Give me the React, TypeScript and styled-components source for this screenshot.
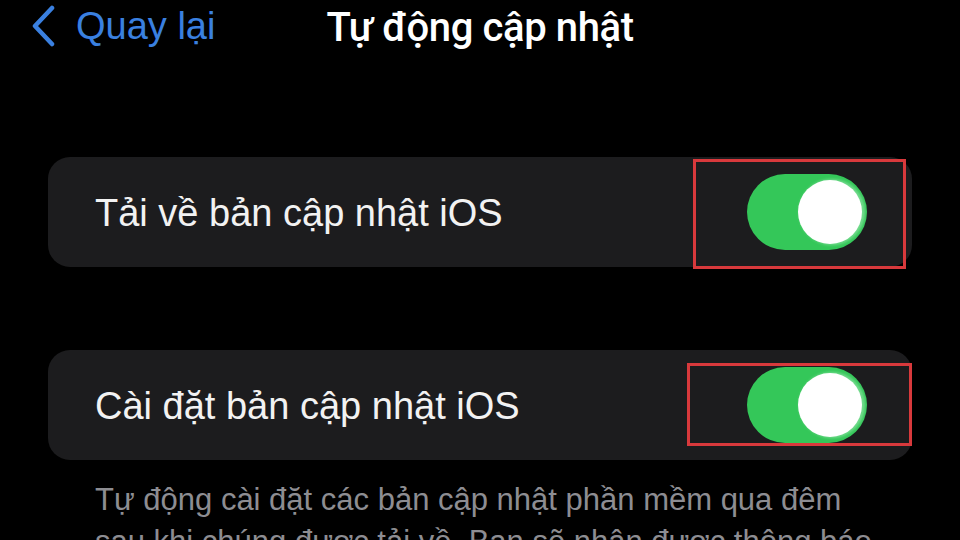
import styled, { createGlobalStyle } from 'styled-components';

const GlobalStyle = createGlobalStyle`
  html, body {
    margin: 0;
    padding: 0;
    background: #000;
  }
  body {
    width: 960px;
    height: 540px;
    overflow: hidden;
    font-family: 'Liberation Sans', 'Noto Sans', sans-serif;
  }
`;

type Box = { top: number; right: number; bottom: number; left: number };

const rows: { label: string; box: Box }[] = [
  { label: 'Tải về bản cập nhật iOS', box: { top: -15, right: -39, bottom: -19, left: -54 } },
  { label: 'Cài đặt bản cập nhật iOS', box: { top: -4, right: -45, bottom: -3, left: -60 } },
];

const ChevronLeft = () => (
  <svg width='28' height='42' viewBox='0 0 28 42' fill='none'>
    <polyline
      points='22,3 5,21 22,39'
      stroke='#3a80e0'
      strokeWidth='4.5'
      strokeLinecap='round'
      strokeLinejoin='round'
    />
  </svg>
);

const App = () => {
  return (
    <Screen>
      <GlobalStyle />
      <NavBar>
        <BackButton>
          <ChevronLeft />
          <span>Quay lại</span>
        </BackButton>
        <Title>Tự động cập nhật</Title>
        <div />
      </NavBar>

      <Content>
        {rows.map((row) => (
          <Card key={row.label}>
            <Label>{row.label}</Label>
            <ToggleWrap>
              <Toggle>
                <Knob />
              </Toggle>
              <Highlight {...row.box} />
            </ToggleWrap>
          </Card>
        ))}
        <Footer>
          Tự động cài đặt các bản cập nhật phần mềm qua đêm sau khi chúng được
          tải về. Bạn sẽ nhận được thông báo trước khi cập nhật được cài đặt.
        </Footer>
      </Content>
    </Screen>
  );
};

export default App;

const Screen = styled.div`
  width: 960px;
  height: 540px;
  overflow: hidden;
  background: #000;
  color: #fff;
`;

const NavBar = styled.div`
  display: grid;
  grid-template-columns: 1fr auto 1fr;
  align-items: center;
  height: 54px;
  padding: 0 30px;
`;

const BackButton = styled.div`
  display: flex;
  align-items: center;
  gap: 18px;
  color: #3a80e0;
  font-size: 38px;
  margin-top: -2px;

  svg {
    flex-shrink: 0;
  }
`;

const Title = styled.h1`
  margin: 0;
  font-family: Roboto, 'Liberation Sans', sans-serif;
  font-size: 40px;
  font-weight: 500;
  color: #fff;
  letter-spacing: -0.4px;
`;

const Content = styled.div`
  display: flex;
  flex-direction: column;
  gap: 83px;
  padding: 103px 48px 0 48px;
`;

const Card = styled.div`
  display: flex;
  align-items: center;
  justify-content: space-between;
  height: 110px;
  padding: 0 45px 0 47px;
  background: #1c1c1e;
  border-radius: 22px;
`;

const Label = styled.span`
  font-size: 38px;
  color: #f2f2f2;
  margin-top: 2px;
`;

const ToggleWrap = styled.div`
  position: relative;
`;

const Toggle = styled.div`
  display: flex;
  align-items: center;
  justify-content: flex-end;
  width: 120px;
  height: 76px;
  padding: 0 5px;
  box-sizing: border-box;
  border-radius: 38px;
  background: #34c759;
`;

const Knob = styled.div`
  width: 64px;
  height: 64px;
  border-radius: 50%;
  background: #fff;
  box-shadow: 2px 0 3px 1px rgba(170, 235, 185, 0.55);
`;

const Highlight = styled.span<Box>`
  position: absolute;
  top: ${({ top }) => top}px;
  right: ${({ right }) => right}px;
  bottom: ${({ bottom }) => bottom}px;
  left: ${({ left }) => left}px;
  border: 3px solid #d8393c;
  pointer-events: none;
`;

const Footer = styled.p`
  margin: -64px 0 0 0;
  padding: 0 40px 0 47px;
  font-size: 31px;
  line-height: 42px;
  color: #8d8d92;
`;
